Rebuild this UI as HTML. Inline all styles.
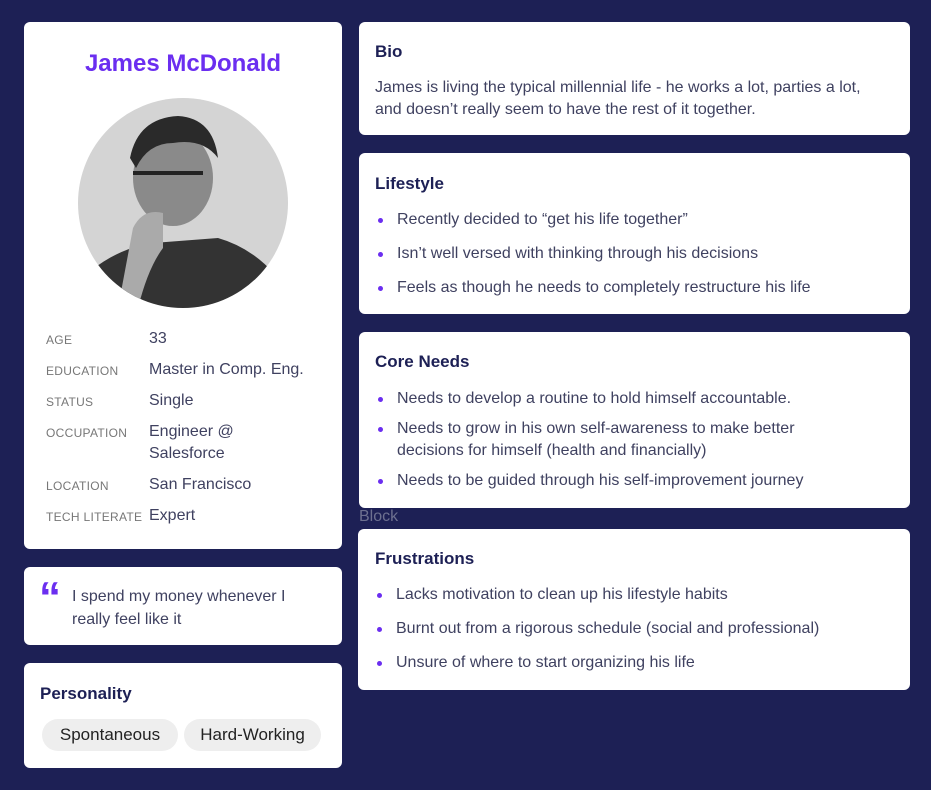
<!DOCTYPE html><html><head><style>
body{margin:0;width:931px;height:790px;background:#1d2055;font-family:"Liberation Sans",sans-serif;position:relative;overflow:hidden}
.c{position:absolute;background:#fff;border-radius:6px}
h2{margin:0;position:absolute;font-size:17px;color:#1d2055;font-weight:bold}
ul{position:absolute;margin:0;padding:0;list-style:none;font-size:16px;color:#3f4160}
li{position:relative;padding-left:22px;line-height:22px}
li:before{content:"";position:absolute;left:3px;top:9px;width:5px;height:5px;border-radius:50%;background:#6b2ef0}
.lab{position:absolute;left:22px;font-size:12px;color:#777;letter-spacing:.3px}
.val{position:absolute;left:125px;font-size:16px;color:#3f4160;line-height:22px}
.tag{position:absolute;top:56px;height:32px;line-height:32px;border-radius:16px;background:#eee;font-size:17px;color:#222;padding:0 13px}
</style></head><body>
<div class="c" style="left:24px;top:22px;width:318px;height:527px">
<div style="position:absolute;top:28px;width:100%;text-align:center;font-size:24px;font-weight:bold;color:#6b2ef0">James McDonald</div>
<svg style="position:absolute;left:54px;top:76px" width="210" height="210" viewBox="0 0 210 210"><defs><clipPath id="k"><circle cx="105" cy="105" r="105"/></clipPath></defs><g clip-path="url(#k)"><rect width="210" height="210" fill="#d4d4d4"/><path d="M10 175 Q40 150 75 145 L140 140 Q175 150 200 180 L210 210 L0 210Z" fill="#333"/><ellipse cx="95" cy="80" rx="40" ry="48" fill="#8a8a8a"/><path d="M52 60 Q60 20 100 18 Q135 20 140 60 Q125 40 95 45 Q70 45 58 70Z" fill="#2a2a2a"/><path d="M55 75 H125" stroke="#222" stroke-width="4"/><path d="M55 130 Q65 110 85 115 L85 150 Q70 170 60 210 L40 210Z" fill="#aaa"/></g></svg>
<div class="lab" style="top:311px">AGE</div><div class="val" style="top:306px">33</div>
<div class="lab" style="top:342px">EDUCATION</div><div class="val" style="top:337px">Master in Comp. Eng.</div>
<div class="lab" style="top:373px">STATUS</div><div class="val" style="top:368px">Single</div>
<div class="lab" style="top:404px">OCCUPATION</div><div class="val" style="top:399px">Engineer @<br>Salesforce</div>
<div class="lab" style="top:457px">LOCATION</div><div class="val" style="top:452px">San Francisco</div>
<div class="lab" style="top:488px">TECH LITERATE</div><div class="val" style="top:483px">Expert</div>
</div>
<div class="c" style="left:24px;top:567px;width:318px;height:78px">
<div style="position:absolute;left:15px;top:6px;font-size:44px;font-weight:bold;color:#6b2ef0">“</div>
<div style="position:absolute;left:48px;top:18px;font-size:16px;color:#3f4160;line-height:23px">I spend my money whenever I<br>really feel like it</div></div>
<div class="c" style="left:24px;top:663px;width:318px;height:105px">
<h2 style="left:16px;top:21px">Personality</h2>
<div class="tag" style="left:18px;width:110px;text-align:center">Spontaneous</div><div class="tag" style="left:160px;width:111px;text-align:center">Hard-Working</div></div>
<div class="c" style="left:359px;top:22px;width:551px;height:113px">
<h2 style="left:16px;top:20px">Bio</h2>
<div style="position:absolute;left:16px;top:55px;width:500px;font-size:16px;color:#3f4160;line-height:22px">James is living the typical millennial life - he works a lot, parties a lot, and doesn’t really seem to have the rest of it together.</div></div>
<div class="c" style="left:359px;top:153px;width:551px;height:161px">
<h2 style="left:16px;top:21px">Lifestyle</h2>
<ul style="left:16px;top:56px"><li>Recently decided to “get his life together”</li><li style="margin-top:12px">Isn’t well versed with thinking through his decisions</li><li style="margin-top:12px">Feels as though he needs to completely restructure his life</li></ul></div>
<div class="c" style="left:359px;top:332px;width:551px;height:176px">
<h2 style="left:16px;top:20px">Core Needs</h2>
<ul style="left:16px;top:56px;width:470px"><li>Needs to develop a routine to hold himself accountable.</li><li style="margin-top:8px">Needs to grow in his own self-awareness to make better decisions for himself (health and financially)</li><li style="margin-top:8px">Needs to be guided through his self-improvement journey</li></ul></div>
<div style="position:absolute;left:359px;top:508px;font-size:16px;color:#6d7090">Block</div>
<div class="c" style="left:358px;top:529px;width:552px;height:161px">
<h2 style="left:17px;top:20px">Frustrations</h2>
<ul style="left:16px;top:55px"><li>Lacks motivation to clean up his lifestyle habits</li><li style="margin-top:12px">Burnt out from a rigorous schedule (social and professional)</li><li style="margin-top:12px">Unsure of where to start organizing his life</li></ul></div>
</body></html>
